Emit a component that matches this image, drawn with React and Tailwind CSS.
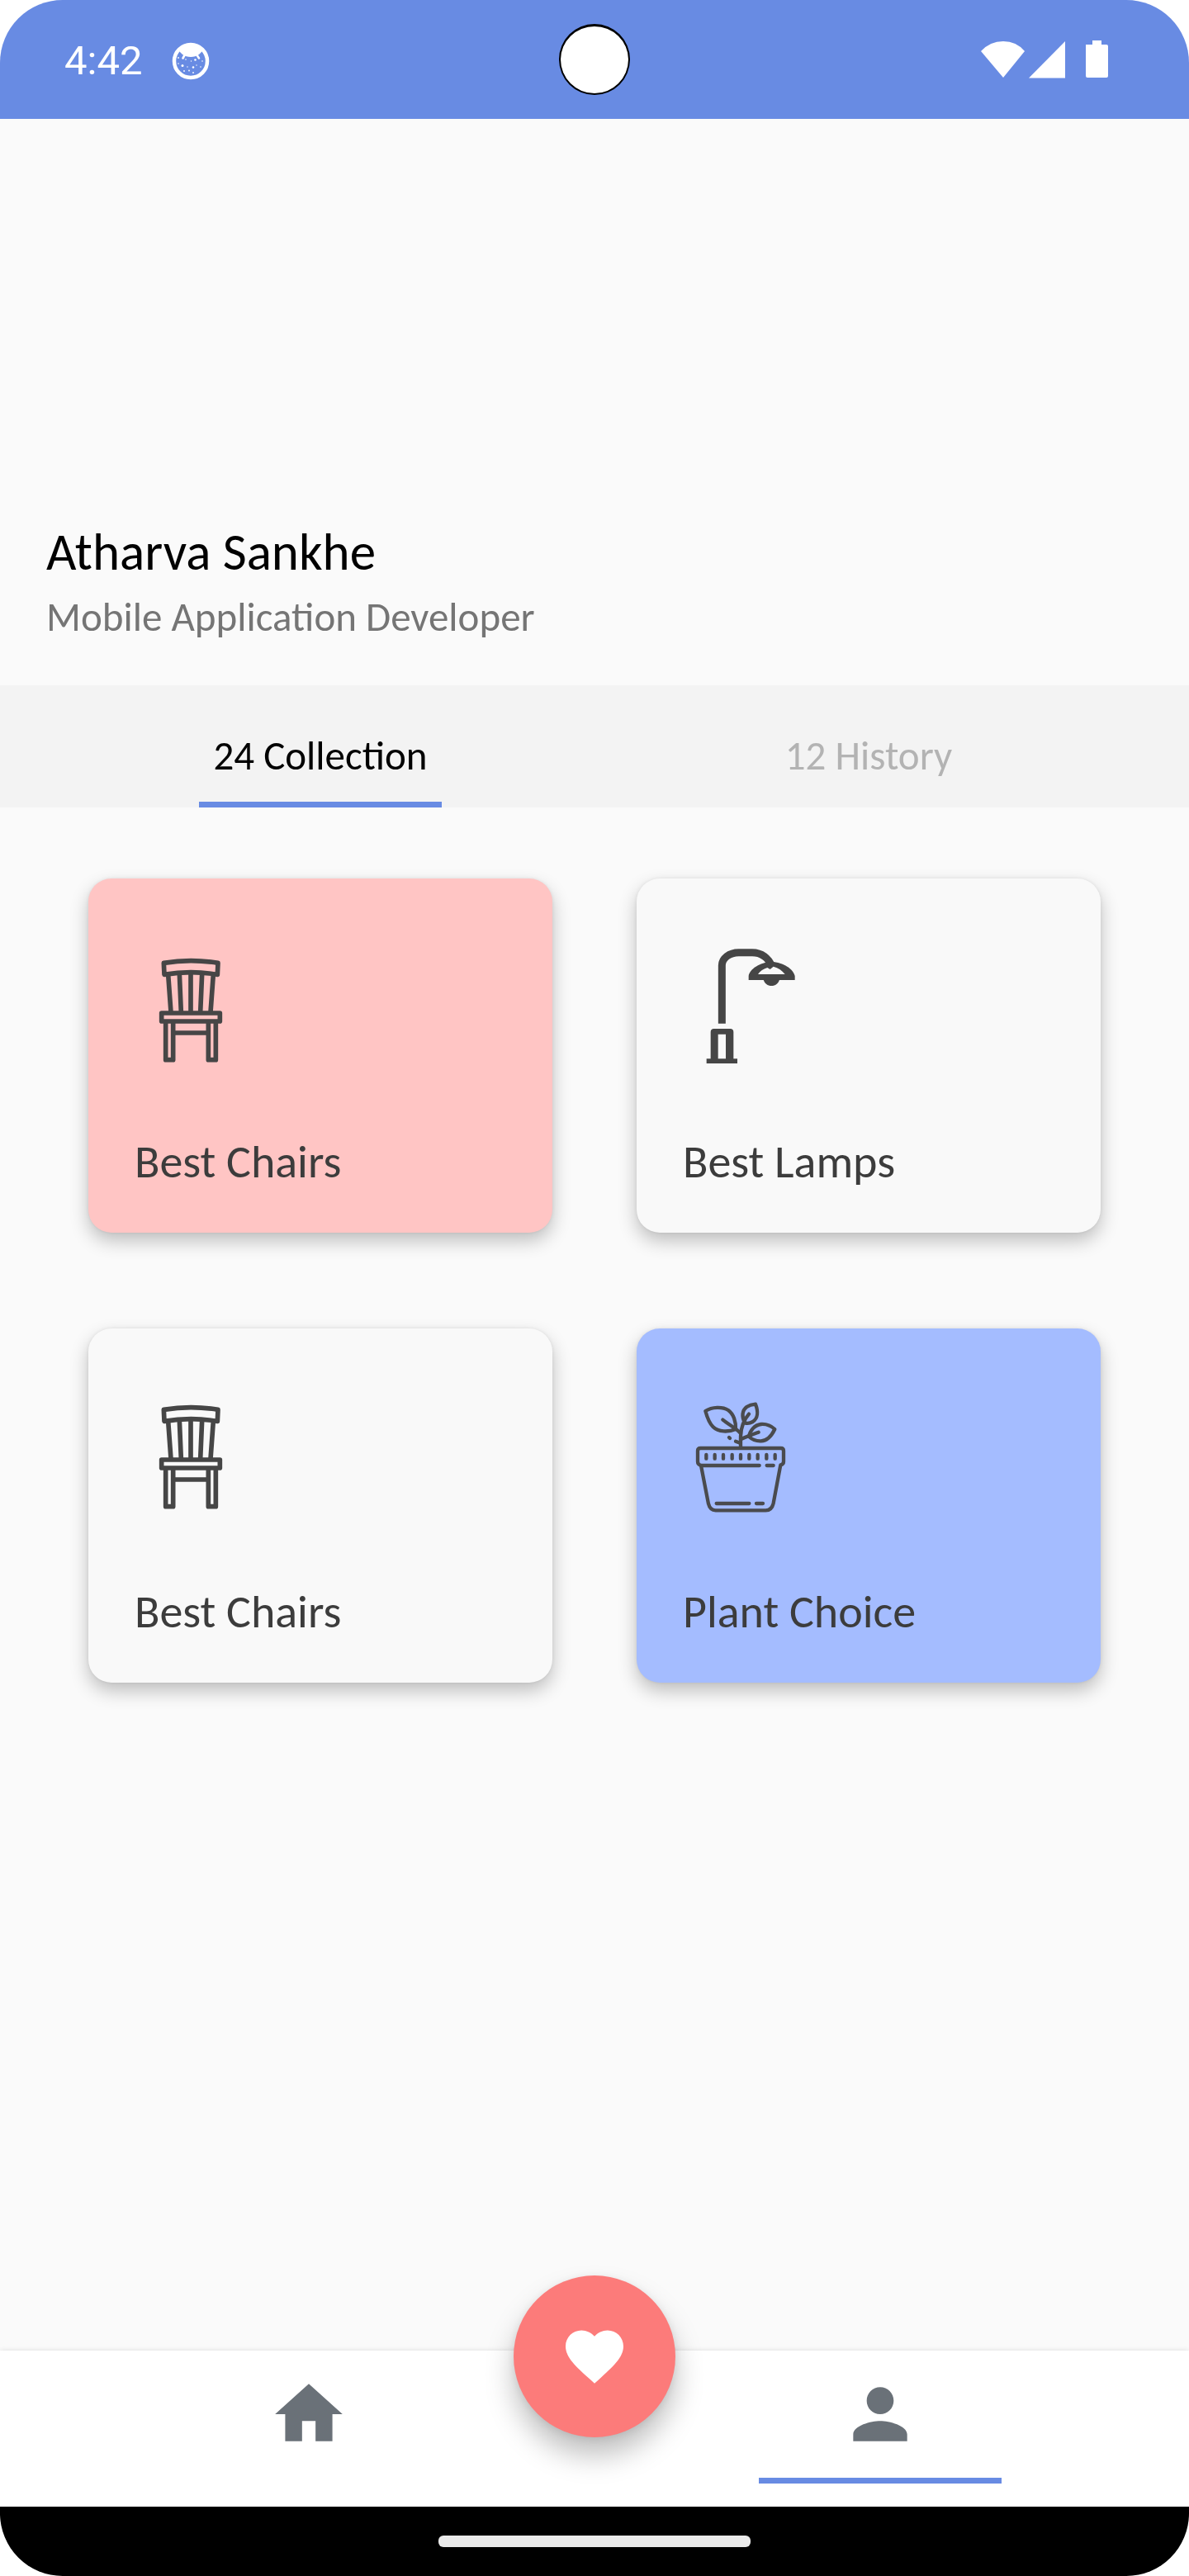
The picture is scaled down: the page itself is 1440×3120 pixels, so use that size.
const INK = '#464646';

function ChairIcon({ viewBox = '9 0 480 540' }) {
  return (
    <svg viewBox={viewBox} className="h-[180px] w-40" fill="none" stroke={INK} strokeWidth="17" strokeLinejoin="round" aria-hidden="true">
      <path d="M115 109Q214 93 312 109L310 151Q214 135 117 151Z" />
      <path d="M131 151L141 288M172 148L178 288M213 146V288M254 148L248 288M295 151L285 288" />
      <path d="M107 291H319V321H107Z" />
      <path d="M122 321V461H149V321M277 321V461H304V321M149 363H277" />
    </svg>
  );
}

function RaisedChairIcon() {
  return <ChairIcon viewBox="9 12 480 540" />;
}

function LampIcon() {
  return (
    <svg viewBox="-9 0 480 540" className="h-[180px] w-40" fill={INK} aria-hidden="true">
      <path d="M133 329V118C133 92 160 71 194 71H243C278 71 302 92 314 120" fill="none" stroke={INK} strokeWidth="27" />
      <path fillRule="evenodd" d="M230 171V156C234 130 270 108 313 104C357 108 393 130 398 156V171ZM264 150H362C352 136 338 127 320 122L308 132L298 126C282 132 271 139 264 150Z" />
      <path d="M284 170H342C338 183 327 192 313 192C299 192 288 183 284 170Z" />
      <path fillRule="evenodd" d="M92 457V360Q92 348 104 348H163Q175 348 175 360V457H189V474H77V457ZM119 368V457H147V368Z" />
    </svg>
  );
}

function PlantIcon() {
  return (
    <svg viewBox="-9 -15 480 540" className="h-[180px] w-40" fill="none" stroke="#4a4b4e" strokeWidth="13" strokeLinecap="round" strokeLinejoin="round" aria-hidden="true">
      <path d="M55 222H347Q357 222 357 232V271Q357 281 346 283L320 422Q314 448 292 448H110Q90 448 84 424L57 285Q45 282 45 271V232Q45 222 55 222Z" />
      <path d="M57 285H269M296 285H320M113 423H232M258 423H282" />
      <path d="M76 246V260M107 246V260M138 246V260M170 246V260M201 246V260M232 246V260M263 246V260M295 246V260M326 246V260" />
      <path d="M201 218V178C202 155 210 122 231 98" />
      <path d="M136 119C160 138 186 150 201 168M201 190C220 180 245 172 266 164M183 197L199 203M159 183L162 186" />
      <path d="M73 87C97 72 134 70 156 84C176 98 184 127 183 153C157 164 120 164 101 145C86 130 79 109 73 87Z" />
      <path d="M255 62C265 88 264 114 245 126C236 131 226 133 216 130C204 108 206 85 223 72C232 66 243 63 255 62Z" />
      <path d="M231 180C235 158 251 138 275 135C296 133 314 143 325 153C314 176 300 195 275 196C255 197 242 190 231 180Z" />
    </svg>
  );
}

function StatusBar() {
  return (
    <header className="relative flex h-36 items-center justify-between bg-[#688be3] pr-[98px] pl-[78px] text-white">
      <div className="flex items-center gap-9 pt-1">
        <time className="font-[Roboto,sans-serif] text-[49px] leading-[58px]">4:42</time>
        <svg viewBox="0 0 46 46" className="size-[46px]" aria-hidden="true">
          <circle cx="23" cy="23" r="20" fill="none" stroke="#fff" strokeWidth="4.5" />
          <path d="M9 10C14 3 32 3 37 10L36 12L33 15C30 17 27 18 23 18S16 17 13 15L10 12Z" fill="#fff" />
          <path d="M16 15L13.500 19.500M30 15L33 19.500" stroke="#fff" strokeWidth="2.600" strokeLinecap="round" />
          <g fill="#fff">
            <circle cx="8" cy="19" r="0.900" /><circle cx="17" cy="21" r="0.800" /><circle cx="28.500" cy="21.500" r="1.300" />
            <circle cx="8" cy="26" r="0.800" /><circle cx="13" cy="28.500" r="1.500" /><circle cx="19" cy="30" r="0.700" />
            <circle cx="26" cy="30.500" r="1.300" /><circle cx="30" cy="28" r="0.700" /><circle cx="35" cy="30" r="0.800" />
            <circle cx="15" cy="35" r="0.900" /><circle cx="21" cy="34.500" r="0.900" /><circle cx="26" cy="37" r="0.900" />
            <circle cx="23.500" cy="23" r="0.700" /><circle cx="37" cy="23" r="0.800" />
          </g>
        </svg>
      </div>
      <div className="absolute top-[29px] left-1/2 size-[86px] -translate-x-1/2 rounded-full border-2 border-t-[3px] border-black bg-white" />
      <svg viewBox="0 0 154 46" className="h-[46px] w-[154px]" fill="#fff" role="img" aria-label="Wi-Fi, signal and battery">
        <path d="M27 45L0 13Q11 1 27 1T53 13Z" />
        <path d="M58 45.500L102 1V45.500Z" />
        <path d="M127 5H135V0H146V5H152Q154 5 154 7V43Q154 45 152 45H129Q127 45 127 43Z" />
      </svg>
    </header>
  );
}

const TABS = [
  { label: '24 Collection', active: true },
  { label: '12 History', active: false },
];

const CARDS = [
  { id: 1, label: 'Best Chairs', Icon: ChairIcon, tone: 'bg-[#ffc5c4]' },
  { id: 2, label: 'Best Lamps', Icon: LampIcon, tone: 'bg-[#f9f9f9]' },
  { id: 3, label: 'Best Chairs', Icon: RaisedChairIcon, tone: 'bg-[#f9f9f9]' },
  { id: 4, label: 'Plant Choice', Icon: PlantIcon, tone: 'bg-[#a4bcff]' },
];

function CollectionCard({ label, Icon, tone }) {
  return (
    <button type="button" className={`${tone} rounded-[28px] px-14 pt-[66px] pb-[54px] text-left shadow-[0_10px_22px_rgba(0,0,0,0.24),0_0_4px_rgba(0,0,0,0.08)]`}>
      <Icon />
      <span className="mt-[65px] block text-[56px] leading-[64px] text-[#3c3c3c]">{label}</span>
    </button>
  );
}

function NavTab({ label, path, active }) {
  return (
    <a href="#" aria-label={label} aria-current={active ? 'page' : undefined} className="flex flex-col items-center gap-7">
      <svg viewBox="0 0 24 24" className="size-[98px]" fill="#6a7178" aria-hidden="true"><path d={path} /></svg>
      <span className={active ? 'h-[7px] w-[294px] bg-[#688be3]' : 'h-[7px] w-[294px]'} />
    </a>
  );
}

export default function App() {
  return (
    <div className="min-h-screen bg-white">
      <div className="flex min-h-screen flex-col overflow-hidden rounded-[76px] bg-[#fafafa] font-[Carlito,Lato,sans-serif]">
        <StatusBar />
        <section className="px-14 pt-[491px] pb-[55px]">
          <h1 className="text-[63px] leading-[68px] text-black">Atharva Sankhe</h1>
          <p className="mt-4 text-[49px] leading-[56px] text-[#757575]">Mobile Application Developer</p>
        </section>
        <div role="tablist" className="grid grid-cols-2 bg-[#f3f3f3] px-14">
          {TABS.map(({ label, active }) => (
            <button key={label} type="button" role="tab" aria-selected={active} className="flex flex-col items-center gap-7 pt-[57px]">
              <span className={`text-[49px] leading-[56px] ${active ? 'text-black' : 'text-[#b3b3b3]'}`}>{label}</span>
              <span className={active ? 'h-[7px] w-[294px] bg-[#688be3]' : 'h-[7px] w-[294px]'} />
            </button>
          ))}
        </div>
        <main className="flex-1 px-[107px] pt-[86px]">
          <div className="grid grid-cols-2 gap-x-[102px] gap-y-[116px]">
            {CARDS.map((card) => <CollectionCard key={card.id} {...card} />)}
          </div>
        </main>
        <nav className="relative grid grid-cols-2 bg-white p-7 shadow-[0_0_6px_rgba(0,0,0,0.12)]">
          <NavTab label="Home" path="M10 20v-6h4v6h5v-8h3L12 3 2 12h3v8z" />
          <NavTab label="Profile" active path="M12 12c2.210 0 4-1.790 4-4s-1.790-4-4-4-4 1.790-4 4 1.790 4 4 4zm0 2c-2.670 0-8 1.340-8 4v2h16v-2c0-2.660-5.330-4-8-4z" />
          <button type="button" aria-label="Favourites" className="absolute -top-[91px] left-1/2 flex size-[196px] -translate-x-1/2 items-center justify-center rounded-full bg-[#fc7b7a] shadow-[0_22px_34px_rgba(0,0,0,0.25),0_2px_10px_rgba(0,0,0,0.08)]">
            <svg viewBox="0 0 24 24" className="size-[84px]" fill="#fff" aria-hidden="true">
              <path d="M12 21.350l-1.450-1.320C5.400 15.360 2 12.280 2 8.500 2 5.420 4.420 3 7.500 3c1.740 0 3.410.810 4.500 2.090C13.090 3.810 14.760 3 16.500 3 19.580 3 22 5.420 22 8.500c0 3.780-3.400 6.860-8.550 11.540L12 21.350z" />
            </svg>
          </button>
        </nav>
        <footer className="relative flex h-[84px] items-center justify-center bg-black">
          <div className="h-3.5 w-[378px] rounded-md bg-[#eaeaea]" />
        </footer>
      </div>
    </div>
  );
}
